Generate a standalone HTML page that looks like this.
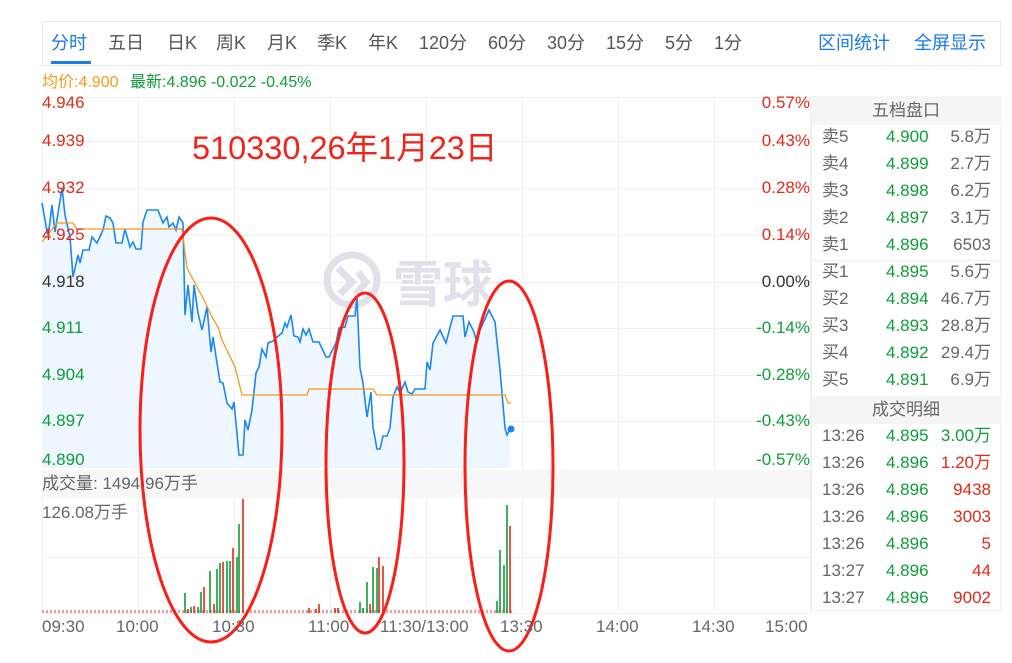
<!DOCTYPE html>
<html><head><meta charset="utf-8"><style>
*{margin:0;padding:0;box-sizing:border-box}
body{width:1012px;height:663px;background:#fff;font-family:"Liberation Sans","Noto Sans CJK SC",sans-serif;position:relative;overflow:hidden}
.a{position:absolute;white-space:nowrap}
.tab{position:absolute;top:32px;font-size:18px;color:#555;line-height:22px}
.r{position:absolute;font-size:17px;line-height:20px}
.g{color:#0f9d3a}.red{color:#e02a1a}.gr{color:#666}
</style></head><body>
<div class="a" style="left:42px;top:21px;width:959px;height:45px;border:1px solid #e8e8e8"></div>
<div class="tab" style="left:51px;color:#1a7ae8">分时</div>
<div class="a" style="left:51px;top:61px;width:40px;height:3px;background:#1a7ae8"></div>
<div class="tab" style="left:108px">五日</div>
<div class="tab" style="left:167px">日K</div>
<div class="tab" style="left:216px">周K</div>
<div class="tab" style="left:267px">月K</div>
<div class="tab" style="left:317px">季K</div>
<div class="tab" style="left:368px">年K</div>
<div class="tab" style="left:419px">120分</div>
<div class="tab" style="left:488px">60分</div>
<div class="tab" style="left:547px">30分</div>
<div class="tab" style="left:606px">15分</div>
<div class="tab" style="left:665px">5分</div>
<div class="tab" style="left:714px">1分</div>
<div class="tab" style="left:818px;color:#1a7ae8">区间统计</div>
<div class="tab" style="left:914px;color:#1a7ae8">全屏显示</div>
<div class="a" style="left:42px;top:68px;font-size:16px;color:#f39a1b">均价:4.900</div>
<div class="a" style="left:130px;top:68px;font-size:16px;color:#0f9d3a">最新:4.896 -0.022 -0.45%</div>

<svg class="a" style="left:0;top:0" width="1012" height="663">
<g stroke="#efefef" stroke-width="1">
<line x1="42" y1="97.5" x2="810" y2="97.5"/><line x1="42" y1="141.5" x2="810" y2="141.5"/><line x1="42" y1="188.5" x2="810" y2="188.5"/><line x1="42" y1="235.5" x2="810" y2="235.5"/><line x1="42" y1="282.5" x2="810" y2="282.5"/><line x1="42" y1="328.5" x2="810" y2="328.5"/><line x1="42" y1="375.5" x2="810" y2="375.5"/><line x1="42" y1="421.5" x2="810" y2="421.5"/>
<line x1="42" y1="557.5" x2="810" y2="557.5"/><line x1="42" y1="613.5" x2="810" y2="613.5"/>
<line x1="42.5" y1="97" x2="42.5" y2="613"/><line x1="138.5" y1="97" x2="138.5" y2="613"/><line x1="234.5" y1="97" x2="234.5" y2="613"/><line x1="330.5" y1="97" x2="330.5" y2="613"/><line x1="426.5" y1="97" x2="426.5" y2="613"/><line x1="522.5" y1="97" x2="522.5" y2="613"/><line x1="618.5" y1="97" x2="618.5" y2="613"/><line x1="714.5" y1="97" x2="714.5" y2="613"/><line x1="810.5" y1="97" x2="810.5" y2="613"/>
</g>
<rect x="42" y="470" width="768" height="28" fill="#f7f7f7"/>
<g fill="none" stroke="#dfe2ea" stroke-width="7"><circle cx="352" cy="280" r="25"/><path d="M338 268 L352 282 L340 294 M356 294 L366 282 L358 272"/></g>
<text x="393" y="302" font-size="50" fill="#dfe2ea" font-family="Noto Sans CJK SC,sans-serif" font-weight="bold">雪球</text>
<path d="M42 203 L48 237 L52 205 L55 232 L62 188 L65 215 L70 237 L73 277 L78 255 L80 263 L83 250 L89 250 L92 237 L97 243 L103 230 L106 216 L110 218 L113 223 L116 243 L122 243 L125 229 L130 247 L133 242 L136 249 L141 249 L143 222 L147 210 L158 210 L163 223 L167 217 L169 227 L173 223 L176 230 L179 217 L183 223 L185 315 L188 285 L192 322 L194 285 L198 313 L202 330 L207 307 L211 352 L213 337 L220 382 L223 383 L227 403 L232 409 L234 402 L239 455 L243 455 L245 420 L248 430 L252 410 L256 373 L259 367 L262 349 L266 357 L268 343 L273 341 L277 337 L282 333 L285 323 L287 327 L291 315 L294 336 L298 337 L300 342 L303 329 L306 335 L309 329 L313 342 L319 342 L326 357 L329 357 L336 343 L339 328 L345 327 L348 316 L355 316 L357 298 L360 368 L363 383 L367 417 L371 392 L373 427 L377 449 L380 449 L383 436 L387 436 L390 428 L393 397 L397 387 L400 393 L405 382 L408 392 L412 394 L415 389 L425 389 L427 362 L430 370 L433 343 L440 330 L446 343 L453 316 L463 316 L465 337 L469 322 L474 332 L477 343 L480 330 L489 310 L495 322 L500 370 L505 428 L507 435 L510 429 L510 468 L42 468 Z" fill="#eef6ff"/>
<path d="M42 203 L48 237 L52 205 L55 232 L62 188 L65 215 L70 237 L73 277 L78 255 L80 263 L83 250 L89 250 L92 237 L97 243 L103 230 L106 216 L110 218 L113 223 L116 243 L122 243 L125 229 L130 247 L133 242 L136 249 L141 249 L143 222 L147 210 L158 210 L163 223 L167 217 L169 227 L173 223 L176 230 L179 217 L183 223 L185 315 L188 285 L192 322 L194 285 L198 313 L202 330 L207 307 L211 352 L213 337 L220 382 L223 383 L227 403 L232 409 L234 402 L239 455 L243 455 L245 420 L248 430 L252 410 L256 373 L259 367 L262 349 L266 357 L268 343 L273 341 L277 337 L282 333 L285 323 L287 327 L291 315 L294 336 L298 337 L300 342 L303 329 L306 335 L309 329 L313 342 L319 342 L326 357 L329 357 L336 343 L339 328 L345 327 L348 316 L355 316 L357 298 L360 368 L363 383 L367 417 L371 392 L373 427 L377 449 L380 449 L383 436 L387 436 L390 428 L393 397 L397 387 L400 393 L405 382 L408 392 L412 394 L415 389 L425 389 L427 362 L430 370 L433 343 L440 330 L446 343 L453 316 L463 316 L465 337 L469 322 L474 332 L477 343 L480 330 L489 310 L495 322 L500 370 L505 428 L507 435 L510 429" fill="none" stroke="#1a88f0" stroke-width="1.6"/>
<path d="M42 242 L57 223 L73 223 L77 229 L182 229 L187 268 L195 283 L205 302 L212 317 L218 327 L222 340 L235 367 L242 395 L307 395 L309 389 L373 389 L377 395 L505 395 L508 403 L511 403" fill="none" stroke="#f39a1b" stroke-width="1.3"/>
<circle cx="511" cy="429" r="3.5" fill="#1a88f0"/>
<line x1="42" y1="611.5" x2="512" y2="611.5" stroke="#ec9a9a" stroke-width="3" stroke-dasharray="2 2"/>
<g stroke-width="1.6">
<g stroke="#0f9d3a"><line x1="185" y1="613" x2="185" y2="593"/><line x1="191" y1="613" x2="191" y2="607"/><line x1="198" y1="613" x2="198" y2="607"/><line x1="201" y1="613" x2="201" y2="592"/><line x1="210" y1="613" x2="210" y2="571"/><line x1="217" y1="613" x2="217" y2="569"/><line x1="220" y1="613" x2="220" y2="563"/><line x1="227" y1="613" x2="227" y2="561"/><line x1="230" y1="613" x2="230" y2="561"/><line x1="237" y1="613" x2="237" y2="557"/><line x1="239" y1="613" x2="239" y2="524"/>
<line x1="360" y1="613" x2="360" y2="602"/><line x1="363" y1="613" x2="363" y2="608"/><line x1="367" y1="613" x2="367" y2="582"/><line x1="373" y1="613" x2="373" y2="567"/><line x1="377" y1="613" x2="377" y2="568"/>
<line x1="497" y1="613" x2="497" y2="601"/><line x1="500" y1="613" x2="500" y2="550"/><line x1="504" y1="613" x2="504" y2="565"/><line x1="507" y1="613" x2="507" y2="505"/></g>
<g stroke="#e02a1a"><line x1="188" y1="613" x2="188" y2="609"/><line x1="194" y1="613" x2="194" y2="606"/><line x1="204" y1="613" x2="204" y2="587"/><line x1="214" y1="613" x2="214" y2="604"/><line x1="223" y1="613" x2="223" y2="562"/><line x1="233" y1="613" x2="233" y2="548"/><line x1="243" y1="613" x2="243" y2="499"/>
<line x1="309" y1="613" x2="309" y2="608"/><line x1="316" y1="613" x2="316" y2="609"/><line x1="319" y1="613" x2="319" y2="604"/><line x1="335" y1="613" x2="335" y2="608"/><line x1="338" y1="613" x2="338" y2="608"/><line x1="370" y1="613" x2="370" y2="604"/><line x1="379" y1="613" x2="379" y2="557"/><line x1="383" y1="613" x2="383" y2="566"/>
<line x1="510" y1="613" x2="510" y2="526"/></g></g>
<g fill="none" stroke="#fa1e16" stroke-width="3"><ellipse cx="211" cy="430" rx="71" ry="212"/><ellipse cx="365" cy="463" rx="39" ry="170"/><ellipse cx="509" cy="466" rx="44" ry="185"/></g>
<text x="192" y="159" font-size="32.5" fill="#f0241a" font-family="Liberation Sans,Noto Sans CJK SC,sans-serif">510330,26年1月23日</text>
</svg>

<div class="r red" style="left:42px;top:93px">4.946</div>
<div class="r red" style="left:42px;top:131px">4.939</div>
<div class="r red" style="left:42px;top:178px">4.932</div>
<div class="r red" style="left:42px;top:225px">4.925</div>
<div class="r" style="left:42px;top:272px;color:#333">4.918</div>
<div class="r g" style="left:42px;top:318px">4.911</div>
<div class="r g" style="left:42px;top:365px">4.904</div>
<div class="r g" style="left:42px;top:411px">4.897</div>
<div class="r g" style="left:42px;top:450px">4.890</div>
<div class="r red" style="right:202px;top:93px">0.57%</div>
<div class="r red" style="right:202px;top:131px">0.43%</div>
<div class="r red" style="right:202px;top:178px">0.28%</div>
<div class="r red" style="right:202px;top:225px">0.14%</div>
<div class="r" style="right:202px;top:272px;color:#333">0.00%</div>
<div class="r g" style="right:202px;top:318px">-0.14%</div>
<div class="r g" style="right:202px;top:365px">-0.28%</div>
<div class="r g" style="right:202px;top:411px">-0.43%</div>
<div class="r g" style="right:202px;top:450px">-0.57%</div>
<div class="r gr" style="left:42px;top:474px">成交量: 1494.96万手</div>
<div class="r gr" style="left:42px;top:503px">126.08万手</div>
<div class="r gr" style="left:42px;top:617px">09:30</div>
<div class="r gr" style="left:116px;top:617px">10:00</div>
<div class="r gr" style="left:212px;top:617px">10:30</div>
<div class="r gr" style="left:308px;top:617px">11:00</div>
<div class="r gr" style="left:380px;top:617px">11:30/13:00</div>
<div class="r gr" style="left:500px;top:617px">13:30</div>
<div class="r gr" style="left:596px;top:617px">14:00</div>
<div class="r gr" style="left:692px;top:617px">14:30</div>
<div class="r gr" style="left:765px;top:617px">15:00</div>

<div class="a" style="left:811px;top:96px;width:190px;height:515px;border:1px solid #eee"></div>
<div class="a" style="left:811px;top:96px;width:190px;height:29px;background:#f5f5f5;text-align:center;font-size:17px;line-height:29px;color:#666">五档盘口</div>
<div class="a" style="left:811px;top:260px;width:190px;height:1px;background:#eee"></div>
<div class="a" style="left:811px;top:396px;width:190px;height:28px;background:#f5f5f5;text-align:center;font-size:17px;line-height:28px;color:#666">成交明细</div>
<div id="ob"></div>
<script>
var rows=[["卖5","4.900","5.8万"],["卖4","4.899","2.7万"],["卖3","4.898","6.2万"],["卖2","4.897","3.1万"],["卖1","4.896","6503"],["买1","4.895","5.6万"],["买2","4.894","46.7万"],["买3","4.893","28.8万"],["买4","4.892","29.4万"],["买5","4.891","6.9万"]];
var h="";rows.forEach(function(r,i){var y=127+i*27;h+='<div class="r gr" style="left:822px;top:'+y+'px">'+r[0]+'</div><div class="r g" style="left:886px;top:'+y+'px">'+r[1]+'</div><div class="r gr" style="right:21px;top:'+y+'px">'+r[2]+'</div>';});
var t=[["13:26","4.895","3.00万","g"],["13:26","4.896","1.20万","red"],["13:26","4.896","9438","red"],["13:26","4.896","3003","red"],["13:26","4.896","5","red"],["13:27","4.896","44","red"],["13:27","4.896","9002","red"]];
t.forEach(function(r,i){var y=426+i*27;h+='<div class="r gr" style="left:822px;top:'+y+'px">'+r[0]+'</div><div class="r g" style="left:886px;top:'+y+'px">'+r[1]+'</div><div class="r '+r[3]+'" style="right:21px;top:'+y+'px">'+r[2]+'</div>';});
document.getElementById("ob").innerHTML=h;
</script>
</body></html>
